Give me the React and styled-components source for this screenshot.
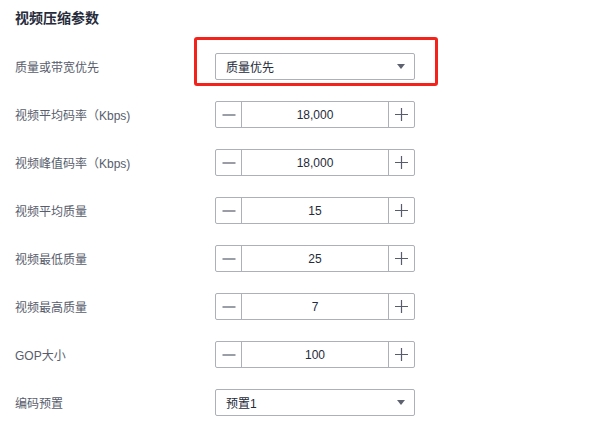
import React from "react";
import styled, { createGlobalStyle } from "styled-components";

const GlobalStyle = createGlobalStyle`
  body {
    margin: 0;
    background: #ffffff;
    font-family: "Liberation Sans", Arial, "Noto Sans CJK SC", sans-serif;
  }
`;

const Page = styled.section`
  width: 596px;
  height: 432px;
  padding: 10px 0 0 15px;
  box-sizing: border-box;
  overflow: hidden;
`;

const Title = styled.h3`
  margin: 0 0 27px 0;
  font-size: 14px;
  line-height: 16px;
  font-weight: 700;
  color: #252b3a;
`;

const Rows = styled.div`
  display: flex;
  flex-direction: column;
  gap: 21px;
`;

const Row = styled.div`
  display: grid;
  grid-template-columns: 200px 200px;
  align-items: center;
  height: 27px;
`;

const Label = styled.span`
  font-size: 12px;
  color: #575d6c;
`;

const SelectWrap = styled.div`
  position: relative;
`;

const Highlight = styled.div`
  position: absolute;
  left: -21px;
  top: -16px;
  width: 244px;
  height: 49px;
  border: 3px solid #f3221b;
  border-radius: 3px;
  box-sizing: border-box;
  pointer-events: none;
`;

const SelectBox = styled.div`
  display: flex;
  align-items: center;
  justify-content: space-between;
  height: 27px;
  box-sizing: border-box;
  border: 1px solid #adb0b8;
  border-radius: 2px;
  padding: 0 9px 0 10px;
  font-size: 12px;
  color: #252b3a;
`;

const Caret = styled.span`
  width: 0;
  height: 0;
  border-left: 4px solid transparent;
  border-right: 4px solid transparent;
  border-top: 5px solid #5e6270;
`;

const Stepper = styled.div`
  display: grid;
  grid-template-columns: 26px 1fr 26px;
  height: 27px;
  box-sizing: border-box;
  border: 1px solid #adb0b8;
  border-radius: 2px;
`;

const StepButton = styled.span`
  display: flex;
  align-items: center;
  justify-content: center;
  color: #575d6c;
  border-left: ${(p) => (p.$side === "right" ? "1px solid #adb0b8" : "none")};
  border-right: ${(p) => (p.$side === "left" ? "1px solid #adb0b8" : "none")};
`;

const Value = styled.span`
  display: flex;
  align-items: center;
  justify-content: center;
  font-size: 12px;
  color: #252b3a;
`;

const MinusIcon = () => (
  <svg width="14" height="14" viewBox="0 0 14 14">
    <path d="M0.5 7h13" stroke="#575d6c" strokeWidth="1.2" />
  </svg>
);

const PlusIcon = () => (
  <svg width="13" height="13" viewBox="0 0 13 13">
    <path d="M0 6.5h13M6.5 0v13" stroke="#575d6c" strokeWidth="1.2" />
  </svg>
);

const fields = [
  { label: "视频平均码率（Kbps)", value: "18,000" },
  { label: "视频峰值码率（Kbps)", value: "18,000" },
  { label: "视频平均质量", value: "15" },
  { label: "视频最低质量", value: "25" },
  { label: "视频最高质量", value: "7" },
  { label: "GOP大小", value: "100" },
];

function NumberInput({ value }) {
  return (
    <Stepper>
      <StepButton $side="left">
        <MinusIcon />
      </StepButton>
      <Value>{value}</Value>
      <StepButton $side="right">
        <PlusIcon />
      </StepButton>
    </Stepper>
  );
}

export default function App() {
  return (
    <>
      <GlobalStyle />
      <Page>
        <Title>视频压缩参数</Title>
        <Rows>
          <Row>
            <Label>质量或带宽优先</Label>
            <SelectWrap>
              <Highlight />
              <SelectBox>
                质量优先
                <Caret />
              </SelectBox>
            </SelectWrap>
          </Row>
          {fields.map((f, i) => (
            <Row key={i}>
              <Label>{f.label}</Label>
              <NumberInput value={f.value} />
            </Row>
          ))}
          <Row>
            <Label>编码预置</Label>
            <SelectBox>
              预置1
              <Caret />
            </SelectBox>
          </Row>
        </Rows>
      </Page>
    </>
  );
}
